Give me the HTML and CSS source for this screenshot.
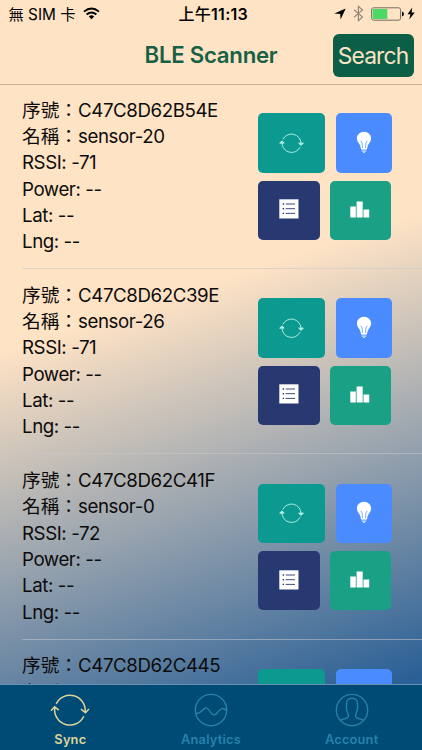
FILE: index.html
```html
<!DOCTYPE html>
<html lang="zh-Hant">
<head>
<meta charset="utf-8">
<title>BLE Scanner</title>
<link rel="stylesheet" href="styles.css">
</head>
<body>
<svg width="0" height="0" class="defs">
  <symbol id="sync" viewBox="0 0 40 36">
    <path d="M6.2 11.8A15.3 15.3 0 0 1 35.2 19.6M33.8 24.2A15.3 15.3 0 0 1 4.8 15.4M1 18.7L4.6 14.8L8.8 18.2M31 17.2L35.4 20.8L39 17"/>
  </symbol>
  <symbol id="sync-small" viewBox="0 0 40 36">
    <path d="M6.2 11.8A15.3 15.3 0 0 1 35.200 18M33.8 24.2A15.3 15.3 0 0 1 4.8 17"/>
    <path fill="#b5efe4" d="M1 18L4.600 14.200L8.400 17.600zM31.400 17.800L35.400 21.500L39 17.600z"/>
  </symbol>
  <symbol id="bulb" viewBox="0 0 16 22">
    <path fill="#fff" d="M8 .7C3.9.7.9 3.7.9 7.4c0 3 1.9 4.4 3 6.6.7 1.4.7 2.8 1.1 4h6c.4-1.2.4-2.6 1.1-4 1.1-2.2 3-3.6 3-6.6C15.1 3.700 12.1.7 8 .7z"/>
    <path fill="none" stroke="#4a8cff" stroke-width=".7" d="M6.500 17L6.100 12L4.800 9.800M9.500 17L9.900 12L11.200 9.800"/>
    <path fill="none" stroke="#dce8ff" stroke-width="1" d="M5.300 18.700h5.400M5.800 20.200h4.400M7 21.400h2"/>
  </symbol>
  <symbol id="list" viewBox="0 0 20 20">
    <path fill="#fff" d="M.3.300h19.200v19.200H.3z"/>
    <path fill="none" stroke="#273970" stroke-width=".9" d="M6.700 5h9.300M6.700 9.700h9.300M6.700 14.400h9.300"/>
    <path fill="none" stroke="#273970" stroke-width="1.400" d="M3.700 5h1.400M3.700 9.700h1.400M3.700 14.400h1.400"/>
  </symbol>
  <symbol id="bars" viewBox="0 0 20 17">
    <path fill="#fff" d="M.3 5.500h5.500v11H.3zM6.600.5h6.100v16H6.600zM13.500 8.500h5.700v8h-5.700z"/>
  </symbol>
</svg>
<div class="screen">
  <header class="status">
    <div class="carrier"><span>無 SIM 卡</span>
      <svg width="17" height="13" viewBox="0 0 17 13"><g fill="none" stroke="#000" stroke-width="1.900"><path d="M1 4.600Q8.500-1.800 16 4.600"/><path d="M3.600 7.500Q8.500 3.300 13.400 7.500"/></g><path d="M8.500 12.200L5.800 9.400Q8.500 7.300 11.200 9.400z"/></svg>
    </div>
    <div class="clock"><span>上午</span>11:13</div>
    <div class="indicators">
      <svg class="loc" width="12" height="12" viewBox="0 0 12 12"><path d="M11.700.4L6.600 11.600L6.200 6L.3 5.600z"/></svg>
      <svg class="bt" width="11" height="17" viewBox="0 0 11 17"><path fill="none" stroke="#968979" stroke-width="1.200" d="M1 4.800L9.500 12L5.400 15.700V1.300L9.500 5L1 12.200"/></svg>
      <svg width="33" height="14" viewBox="0 0 33 14"><rect x=".6" y=".8" width="29" height="12.400" rx="2" fill="none" stroke="#756b60"/><path fill="#4cd964" d="M1.700 2h14.600v10H1.700z"/><path d="M31 4.600q2 .6 2 2.400t-2 2.400z"/></svg>
      <svg class="bolt" width="8" height="13" viewBox="0 0 8 13"><path d="M5.300.5L.5 7.300h2.900L2.300 12.500L7.700 5.400H4.600z"/></svg>
    </div>
  </header>
  <nav class="nav">
    <h1>BLE Scanner</h1>
    <button class="search">Search</button>
  </nav>
  <main class="list">
    <section class="row">
      <div class="info"><p><b>序號：</b>C47C8D62B54E</p><p><b>名稱：</b>sensor-20</p><p>RSSI: -71</p><p>Power: --</p><p>Lat: --</p><p>Lng: --</p></div>
      <div class="actions">
        <div class="pair top"><a class="tile teal"><svg class="i-sync"><use href="#sync-small"/></svg></a><a class="tile blue"><svg class="i-bulb"><use href="#bulb"/></svg></a></div>
        <div class="pair"><a class="tile navy"><svg class="i-list"><use href="#list"/></svg></a><a class="tile green"><svg class="i-bars"><use href="#bars"/></svg></a></div>
      </div>
    </section>
    <section class="row">
      <div class="info"><p><b>序號：</b>C47C8D62C39E</p><p><b>名稱：</b>sensor-26</p><p>RSSI: -71</p><p>Power: --</p><p>Lat: --</p><p>Lng: --</p></div>
      <div class="actions">
        <div class="pair top"><a class="tile teal"><svg class="i-sync"><use href="#sync-small"/></svg></a><a class="tile blue"><svg class="i-bulb"><use href="#bulb"/></svg></a></div>
        <div class="pair"><a class="tile navy"><svg class="i-list"><use href="#list"/></svg></a><a class="tile green"><svg class="i-bars"><use href="#bars"/></svg></a></div>
      </div>
    </section>
    <section class="row">
      <div class="info"><p><b>序號：</b>C47C8D62C41F</p><p><b>名稱：</b>sensor-0</p><p>RSSI: -72</p><p>Power: --</p><p>Lat: --</p><p>Lng: --</p></div>
      <div class="actions">
        <div class="pair top"><a class="tile teal"><svg class="i-sync"><use href="#sync-small"/></svg></a><a class="tile blue"><svg class="i-bulb"><use href="#bulb"/></svg></a></div>
        <div class="pair"><a class="tile navy"><svg class="i-list"><use href="#list"/></svg></a><a class="tile green"><svg class="i-bars"><use href="#bars"/></svg></a></div>
      </div>
    </section>
    <section class="row">
      <div class="info"><p><b>序號：</b>C47C8D62C445</p><p><b>名稱：</b></p></div>
      <div class="actions">
        <div class="pair top"><a class="tile teal"></a><a class="tile blue"></a></div>
      </div>
    </section>
  </main>
  <footer class="tabs">
    <a class="tab active"><svg width="40" height="36"><use href="#sync"/></svg><span>Sync</span></a>
    <a class="tab"><svg width="40" height="36" viewBox="0 0 40 36"><circle cx="20" cy="18" r="15.700"/><path d="M4.600 21.500C8 21.500 9 21 11 18.700C14 15.200 16 15 18.300 18.500C21 22.800 23.500 24.800 26.500 20.500C29.500 15.700 33 15.500 35.400 18.700"/></svg><span>Analytics</span></a>
    <a class="tab"><svg width="40" height="36" viewBox="0 0 40 36"><circle cx="20" cy="18" r="15.700"/><path d="M8.500 28.500C11 26.500 16.500 27 16.500 24C16.500 21.500 14.500 20 14.500 16V11.500C14.500 4.500 25.500 4.500 25.500 11.500V16C25.500 20 23.500 21.500 23.500 24C23.500 27 29 26.500 31.500 28.500"/></svg><span>Account</span></a>
  </footer>
</div>
</body>
</html>
```
FILE: styles.css
```css
* { box-sizing: border-box; }
body { margin: 0; font-family: Inter, "Noto Sans CJK TC", sans-serif; color: #0d0b0a; }
.defs { position: absolute; }
.screen {
  width: 422px; height: 750px; overflow: hidden;
  display: flex; flex-direction: column;
  background: linear-gradient(161.75deg, #ffe3c5 39.5%, #2b6096 91.500%);
}
.status { height: 27px; flex: none; display: grid; grid-template-columns: 1fr auto 1fr; align-items: center; padding: 0 7px 0 8.500px; color: #000; }
.carrier { display: flex; align-items: center; gap: 8px; font-size: 15.300px; }
.carrier span, .clock { margin-top: -2px; }
.clock { font-size: 16px; font-weight: 600; letter-spacing: .25px; padding-left: 3px; }
.clock span { font-weight: 500; }
.indicators { display: flex; align-items: center; justify-content: flex-end; }
.loc { margin-right: 7px; }
.bt { margin-right: 7px; }
.bolt { margin-left: 3px; }
.nav { height: 58px; flex: none; display: grid; grid-template-columns: 1fr auto 1fr; align-items: center; border-bottom: 1px solid #c9b099; padding: 0 8px; }
.nav h1 { grid-column: 2; margin: -2px 0 0; font-size: 22.200px; font-weight: 600; letter-spacing: -.25px; color: #166046; }
.search { justify-self: end; width: 81px; height: 43px; border: 0; border-radius: 6px; background: #0c5f46; color: #fbe4c5; font: 22.800px Inter, sans-serif; letter-spacing: -.85px; padding: 0 1px 0 0; }
.list { flex: 1; min-height: 0; overflow: hidden; }
.row { height: 185.400px; margin-left: 22px; display: flex; justify-content: space-between; padding: 12.500px 30px 0 0; border-bottom: 1px solid rgba(200,199,204,.55); }
.row:first-child { height: 184px; }
.info { font-size: 18.700px; letter-spacing: -.42px; }
.info p { margin: 0; height: 26.400px; line-height: 26.400px; white-space: nowrap; }
.info b { font-weight: 400; letter-spacing: 0; }
.row + .row { padding-top: 13.500px; }
.actions { width: 134px; padding-top: 15.700px; flex: none; }
.pair { display: flex; justify-content: space-between; width: 133px; height: 59px; }
.pair.top { width: 134px; height: 59.400px; margin-bottom: 8px; }
.tile { display: flex; align-items: center; justify-content: center; border-radius: 5px; }
.teal { width: 67px; background: #0c9a90; }
.blue { width: 56px; background: #4a8cff; }
.navy { width: 61.500px; background: #273970; }
.green { width: 61.500px; background: #1aa185; }
.i-sync { width: 25px; height: 22.500px; fill: none; stroke: #b5efe4; stroke-width: 1.500; }
.i-bulb { width: 16px; height: 22px; margin-bottom: 2px; }
.i-list { width: 20px; height: 20px; margin-bottom: 1.500px; }
.i-bars { width: 20px; height: 17px; margin-bottom: 1.500px; }
.tabs { height: 66px; flex: none; display: flex; background: #004b75; border-top: 1px solid #6791ad; }
.tab { flex: 1; display: flex; flex-direction: column; align-items: center; padding-top: 7px; font-size: 12.800px; font-weight: 600; color: #2583aa; }
.tab svg { fill: none; stroke: #2583aa; stroke-width: 1.350; }
.tab.active { color: #ddd59a; }
.tab.active svg { stroke: #ddd59a; stroke-width: 1.500; }
.tab span { margin-top: 4px; line-height: 16px; letter-spacing: .2px; }
```
